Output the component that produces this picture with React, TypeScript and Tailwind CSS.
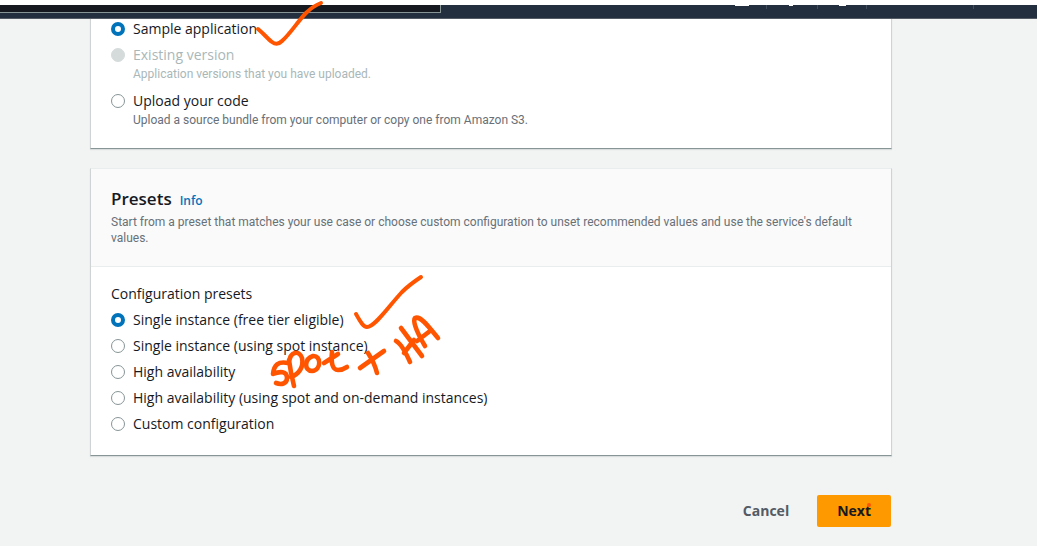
import { useState } from "react";

type Option = { value: string; label: string; description?: string; disabled?: boolean };

const codeOptions: Option[] = [
  { value: "sample", label: "Sample application" },
  {
    value: "existing",
    label: "Existing version",
    description: "Application versions that you have uploaded.",
    disabled: true,
  },
  {
    value: "upload",
    label: "Upload your code",
    description: "Upload a source bundle from your computer or copy one from Amazon S3.",
  },
];

const presetOptions: Option[] = [
  { value: "single", label: "Single instance (free tier eligible)" },
  { value: "single-spot", label: "Single instance (using spot instance)" },
  { value: "ha", label: "High availability" },
  { value: "ha-spot", label: "High availability (using spot and on-demand instances)" },
  { value: "custom", label: "Custom configuration" },
];

function RadioOption({
  name,
  option,
  checked,
  onSelect,
}: {
  name: string;
  option: Option;
  checked: boolean;
  onSelect: (value: string) => void;
}) {
  return (
    <label className={option.description ? "mb-1 flex gap-2 last:mb-0" : "flex gap-2"}>
      <input
        type="radio"
        name={name}
        checked={checked}
        disabled={option.disabled}
        onChange={() => onSelect(option.value)}
        className="mt-1 size-3.5 shrink-0 appearance-none rounded-full border border-[#879596] bg-white checked:border-4 checked:border-[#0073bb] disabled:border-[#d5dbdb] disabled:bg-[#d5dbdb]"
      />
      <span className={option.disabled ? "text-[#aab7b8]" : "text-[#16191f]"}>
        <span className="block text-sm leading-[22px]">{option.label}</span>
        {option.description && (
          <span
            className={
              option.disabled
                ? "block font-['Roboto',sans-serif] text-xs leading-4 text-[#aab7b8]"
                : "block font-['Roboto',sans-serif] text-xs leading-4 text-[#687078]"
            }
          >
            {option.description}
          </span>
        )}
      </span>
    </label>
  );
}

function Annotations() {
  return (
    <svg
      className="pointer-events-none absolute top-0 left-0 z-20"
      width="450"
      height="400"
      fill="none"
      stroke="#ff5500"
      strokeWidth="4"
      strokeLinecap="round"
      strokeLinejoin="round"
      aria-hidden="true"
    >
      <path d="M258 29 C264 34 268 39 272 42 C276 45 279 44 282 41 C291 33 298 21 306 13 C311 8 316 5 321 3" />
      <path d="M356 314 C360 321 363 327 367 327 C375 327 388 307 402 292 C409 285 415 281 421 277" />
      <g strokeWidth="4.6">
        <path d="M288 363 C278 361 274 365 273 374 C280 371 287 371 287 378 C287 384 281 385 276 383" />
        <path d="M289 360 C290 368 292 378 294 386 M289 363 C290 351 299 350 302 358 C304 367 299 374 291 377" />
        <path d="M313 356 C304 359 304 371 312 371 C322 370 321 355 313 356 Z" />
        <path d="M332 352 C331 362 332 370 338 370 C342 370 344 369 347 367 M324 363 L338 354" />
        <path d="M368 353 C372 359 375 365 377 373 M360 368 L384 351" />
        <path d="M401 328 L422 356 M396 341 C400 343 406 353 410 362 M404 353 L414 340" />
        <path d="M425 346 C419 336 412 322 415 318 C421 315 431 330 438 338 M417 341 L430 331" />
      </g>
    </svg>
  );
}

function Divider() {
  return <span className="h-1 w-px bg-[#414d5c]" />;
}

export default function App() {
  const [code, setCode] = useState("sample");
  const [preset, setPreset] = useState("single");

  return (
    <div className="relative min-h-screen bg-[#f2f3f3] font-['Open_Sans','Noto_Sans',sans-serif] text-[#16191f]">
      <Annotations />
      <div className="h-[5px] bg-white" />
      <header className="sticky top-0 z-10 flex h-3.5 items-start justify-between border-b border-[#545b64] bg-[#232f3e]">
        <input
          type="search"
          aria-label="Search"
          className="h-2 w-[441px] border-r border-b border-[#879596] bg-[#16191f] outline-none"
        />
        <div className="flex items-start pr-[63px]" aria-hidden="true">
          <span className="mr-[17px] h-px w-3.5 bg-white" />
          <Divider />
          <span className="mr-6 ml-[22px] h-px w-1 bg-white" />
          <Divider />
          <span className="mr-5 ml-[21px] h-px w-[7px] bg-white" />
          <Divider />
          <span className="w-[106px]" />
          <Divider />
        </div>
      </header>

      <main className="-mt-[5px] mr-[145px] ml-[90px] pb-[19px]">
        <section
          aria-label="Application code"
          className="border border-t-0 border-[#d0d3d3] border-b-[#879596] bg-white px-5 pt-1 pb-5 shadow-[0_1px_1px_0_rgba(0,28,36,0.1)]"
        >
          <div className="flex flex-col gap-1">
            {codeOptions.map((o) => (
              <RadioOption
                key={o.value}
                name="code"
                option={o}
                checked={code === o.value}
                onSelect={setCode}
              />
            ))}
          </div>
        </section>

        <section className="mt-[19px] border border-[#d0d3d3] border-t-[#eaeded] border-b-[#879596] bg-white shadow-[0_1px_1px_0_rgba(0,28,36,0.1)]">
          <div className="border-b border-[#eaeded] bg-[#fafafa] px-5 pt-[19px] pb-5">
            <div className="flex items-baseline gap-2">
              <h2 className="text-[17px] leading-[22px] font-semibold">Presets</h2>
              <a href="#info" className="text-xs leading-4 font-semibold text-[#0073bb]">
                Info
              </a>
            </div>
            <p className="mt-1 font-['Roboto',sans-serif] text-xs leading-4 text-[#687078]">
              Start from a preset that matches your use case or choose custom configuration to unset
              recommended values and use the service's default values.
            </p>
          </div>
          <fieldset className="px-5 pt-4 pb-5">
            <legend className="float-left w-full text-sm leading-[22px]">
              Configuration presets
            </legend>
            <div className="clear-both flex flex-col gap-1 pt-1">
              {presetOptions.map((o) => (
                <RadioOption
                  key={o.value}
                  name="preset"
                  option={o}
                  checked={preset === o.value}
                  onSelect={setPreset}
                />
              ))}
            </div>
          </fieldset>
        </section>

        <div className="mt-[39px] flex justify-end gap-2 px-px">
          <button
            type="button"
            className="h-8 rounded-xs px-5 text-sm font-bold text-[#545b64]"
          >
            Cancel
          </button>
          <button
            type="button"
            className="relative h-8 rounded-xs bg-[#ff9900] px-5 text-sm font-bold text-[#16191f]"
          >
            Next
            <span className="absolute top-2 right-5 size-1 rounded-full bg-[#ff5500]" />
          </button>
        </div>
      </main>
    </div>
  );
}
